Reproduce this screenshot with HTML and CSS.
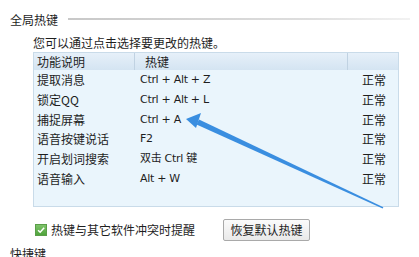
FILE: index.html
```html
<!DOCTYPE html>
<html lang="zh-CN">
<head>
    <meta charset="UTF-8">
    <title>全局热键</title>
    <link rel="stylesheet" href="styles.css">
</head>
<body>
    <div class="section-title">
        <span>全局热键</span>
        <div class="title-line"></div>
    </div>

    <div class="panel">
        <p class="hint">您可以通过点击选择要更改的热键。</p>

        <div class="hotkey-table">
            <div class="head">
                <div class="cell c1">功能说明</div>
                <div class="cell c2">热键</div>
                <div class="cell c3"></div>
            </div>
            <div class="row"><div class="cell c1">提取消息</div><div class="cell c2">Ctrl + Alt + Z</div><div class="cell c3">正常</div></div>
            <div class="row"><div class="cell c1">锁定QQ</div><div class="cell c2">Ctrl + Alt + L</div><div class="cell c3">正常</div></div>
            <div class="row"><div class="cell c1">捕捉屏幕</div><div class="cell c2">Ctrl + A</div><div class="cell c3">正常</div></div>
            <div class="row"><div class="cell c1">语音按键说话</div><div class="cell c2">F2</div><div class="cell c3">正常</div></div>
            <div class="row"><div class="cell c1">开启划词搜索</div><div class="cell c2">双击 Ctrl 键</div><div class="cell c3">正常</div></div>
            <div class="row"><div class="cell c1">语音输入</div><div class="cell c2">Alt + W</div><div class="cell c3">正常</div></div>
        </div>

        <div class="actions">
            <label class="check">
                <span class="box">
                    <svg width="12" height="12" viewBox="0 0 12 12">
                        <path d="M2.5 6.2 L5 8.7 L9.8 3.2" fill="none" stroke="#fff" stroke-width="1.8"/>
                    </svg>
                </span>
                热键与其它软件冲突时提醒
            </label>
            <button class="btn">恢复默认热键</button>
        </div>
    </div>

    <div class="section-title next">
        <span>快捷键</span>
    </div>

    <!-- 指示箭头 -->
    <svg class="arrow" width="419" height="257" viewBox="0 0 419 257">
        <polygon points="199,119.5 196.5,124.5 382.6,208.6 383.4,207.3" fill="#3a8ee0"/>
        <path d="M186 119 L201 113 L196 128 Z" fill="#3a8ee0"/>
    </svg>
</body>
</html>
```

FILE: styles.css
```css
body {
    margin: 0;
    width: 419px;
    height: 257px;
    overflow: hidden;
    background-color: #ffffff;
    font-family: "Noto Sans CJK SC", "Liberation Sans", sans-serif;
    font-size: 12px;
    color: #1e1e1e;
    position: relative;
}

.section-title {
    display: flex;
    align-items: center;
    gap: 10px;
    padding: 10px 9px 0 10px;
    height: 18px;
    font-size: 12px;
}

.title-line {
    flex: 1;
    height: 2px;
    background: linear-gradient(to right, #c8c8c8, #dedede 70%, #f2f2f2);
}

.panel {
    padding-left: 33px;
    width: 366px;
}

.hint {
    margin: 6px 0 0 0;
    height: 18px;
    line-height: 18px;
}

.hotkey-table {
    border: 1px solid #c9dbe9;
    background-color: #eaf5fc;
    height: 155px;
    box-sizing: border-box;
}

.head, .row {
    display: grid;
    grid-template-columns: 101px 213px 1fr;
}

.head {
    height: 17px;
    background: linear-gradient(#e6f0f9, #d4e4f2);
}

.head .cell {
    line-height: 17px;
}

.head .c1, .head .c2 {
    border-right: 1px solid #c0d2e2;
}

.head .c2 {
    padding-left: 10px;
}

.row {
    height: 19.8px;
}

.cell {
    line-height: 19.8px;
    padding-left: 3px;
    white-space: nowrap;
}

.row .c2 {
    padding-left: 5px;
    font-family: "DejaVu Sans", "Noto Sans CJK SC", sans-serif;
    font-size: 11px;
    letter-spacing: -0.3px;
}

.row .c3 {
    padding-left: 14px;
}

.actions {
    display: flex;
    align-items: center;
    margin-top: 12px;
    height: 21px;
}

.check {
    display: flex;
    align-items: center;
    gap: 4px;
    padding-left: 2px;
    width: 188px;
}

.box {
    width: 12px;
    height: 12px;
    background: linear-gradient(#7ec36a, #4fa33b);
    border: 1px solid #5a9e48;
    box-sizing: border-box;
    display: flex;
    align-items: center;
    justify-content: center;
}

.box svg {
    display: block;
}

.btn {
    width: 87px;
    height: 22px;
    padding: 0;
    font-family: "Noto Sans CJK SC", sans-serif;
    font-size: 12px;
    color: #1e1e1e;
    background: linear-gradient(#fbfbfb, #e9e9e9);
    border: 1px solid #a9a9a9;
    border-radius: 2px;
}

.section-title.next {
    padding-top: 4px;
}

.arrow {
    position: absolute;
    left: 0;
    top: 0;
    pointer-events: none;
}
```
